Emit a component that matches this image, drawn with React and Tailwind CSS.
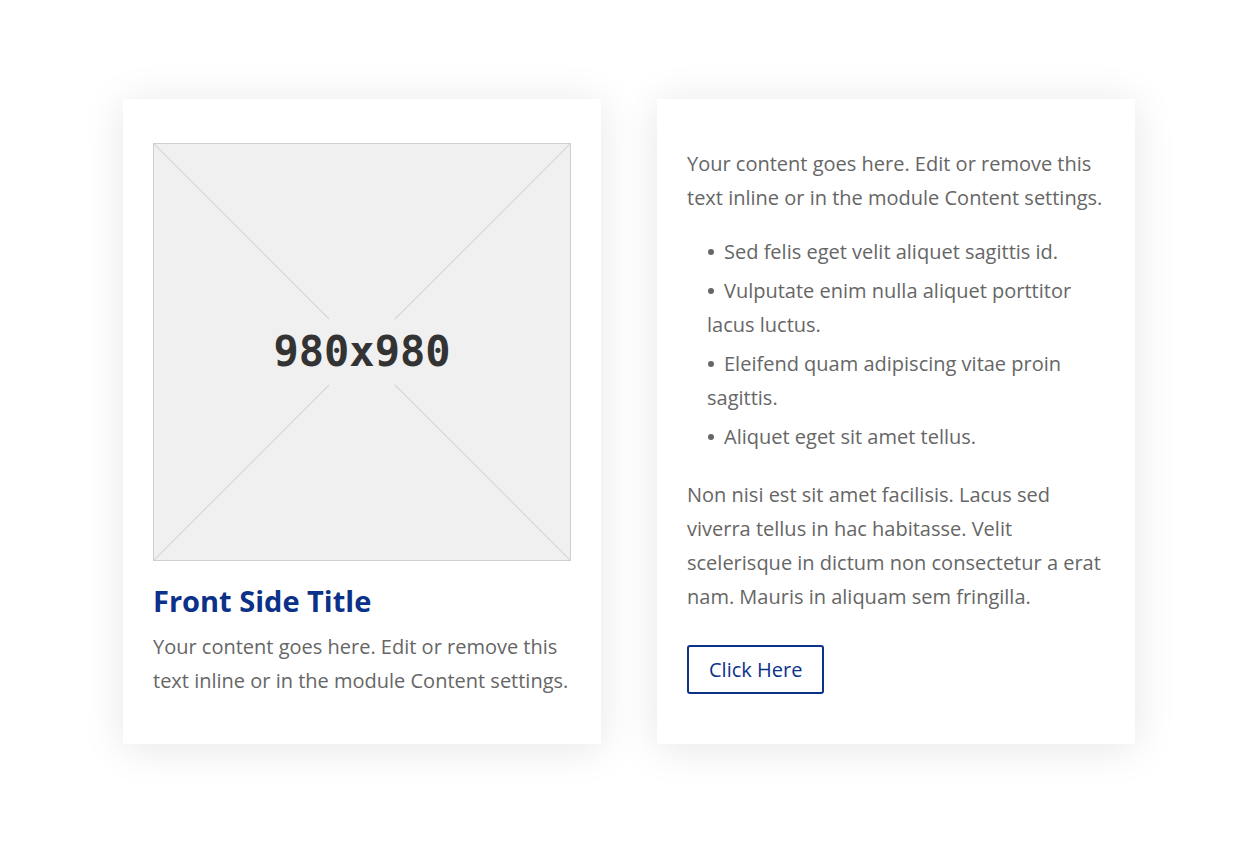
import React from 'react';

const Placeholder = () => (
  <div className="relative w-[418px] h-[418px] bg-[#f0f0f0] border border-[#cfcfcf]">
    <svg className="absolute inset-0" width="416" height="416" viewBox="0 0 416 416">
      <g stroke="#d6d6d6" strokeWidth="1.2">
        <line x1="0" y1="0" x2="175" y2="175" />
        <line x1="416" y1="0" x2="241" y2="175" />
        <line x1="0" y1="416" x2="175" y2="241" />
        <line x1="416" y1="416" x2="241" y2="241" />
      </g>
    </svg>
    <div className="absolute inset-0 flex items-center justify-center">
      <span className="font-['DejaVu_Sans_Mono',monospace] font-bold text-[42px] text-[#333333]">980x980</span>
    </div>
  </div>
);

const items = [
  'Sed felis eget velit aliquet sagittis id.',
  'Vulputate enim nulla aliquet porttitor lacus luctus.',
  'Eleifend quam adipiscing vitae proin sagittis.',
  'Aliquet eget sit amet tellus.',
];

export default function App() {
  return (
    <div className="min-h-[841px] bg-white font-['Open_Sans',sans-serif] text-[20px] leading-[34px] text-[#666666]">
      <div className="flex gap-[56px] pl-[123px] pt-[99px]">
        <div className="w-[478px] bg-white shadow-[0_4px_40px_rgba(0,0,0,0.1)] px-[30px] pt-[44px] pb-[46px]">
          <Placeholder />
          <h2 className="mt-[22px] text-[29px] leading-[36px] font-bold text-[#0c3189]">Front Side Title</h2>
          <p className="mt-[11px]">Your content goes here. Edit or remove this text inline or in the module Content settings.</p>
        </div>
        <div className="w-[478px] bg-white shadow-[0_4px_40px_rgba(0,0,0,0.1)] px-[30px] pt-[48px] pb-[49px]">
          <p>Your content goes here. Edit or remove this text inline or in the module Content settings.</p>
          <ul className="mt-[20px] pl-[20px] space-y-[5px]">
            {items.map(t => (
              <li key={t}>
                <span className="inline-block w-[6px] h-[6px] rounded-full bg-[#666666] ml-[1px] mr-[10px] align-middle mb-[3px]" />
                {t}
              </li>
            ))}
          </ul>
          <p className="mt-[24px]">Non nisi est sit amet facilisis. Lacus sed viverra tellus in hac habitasse. Velit scelerisque in dictum non consectetur a erat nam. Mauris in aliquam sem fringilla.</p>
          <button className="mt-[31px] h-[49px] px-[20px] border-2 border-[#0c3189] rounded-[3px] text-[#0c3189] text-[20px] leading-[34px]">Click Here</button>
        </div>
      </div>
    </div>
  );
}
